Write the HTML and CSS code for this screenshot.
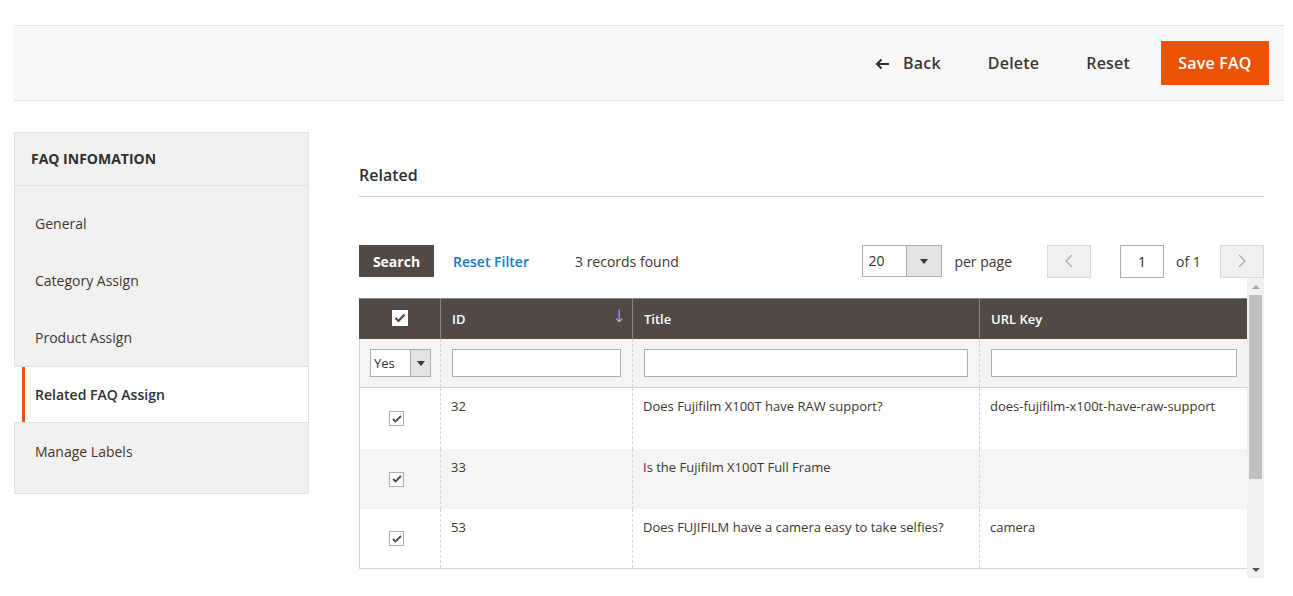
FILE: index.html
```html
<!DOCTYPE html>
<html>
<head>
<meta charset="utf-8">
<link rel="stylesheet" href="styles.css">
</head>
<body>
<div class="page">
  <div class="page-actions">
    <button class="act back"><svg width="15" height="12" viewBox="0 0 15 12"><path d="M14 6H2M6.5 1.5L2 6l4.5 4.5" fill="none" stroke="#303030" stroke-width="2"/></svg>Back</button>
    <button class="act">Delete</button>
    <button class="act">Reset</button>
    <button class="save">Save FAQ</button>
  </div>
  <div class="content">
    <aside class="tabs">
      <div class="tabs-title">FAQ INFOMATION</div>
      <ul class="tab-list">
        <li class="tab">General</li>
        <li class="tab">Category Assign</li>
        <li class="tab">Product Assign</li>
        <li class="tab active">Related FAQ Assign</li>
        <li class="tab last">Manage Labels</li>
      </ul>
    </aside>
    <main class="main">
      <h2 class="section-title">Related</h2>
      <div class="toolbar">
        <button class="search">Search</button>
        <a class="reset-filter">Reset Filter</a>
        <span class="records">3 records found</span>
        <div class="pager">
          <div class="limit"><span class="limit-val">20</span><span class="limit-arrow"><i class="tri"></i></span></div>
          <span class="per-page">per page</span>
          <button class="pg prev"><svg width="8" height="14" viewBox="0 0 8 14"><path d="M7 1L1 7l6 6" fill="none" stroke="#adadad" stroke-width="1.3"/></svg></button>
          <div class="page-input">1</div>
          <span class="of">of 1</span>
          <button class="pg next"><svg width="8" height="14" viewBox="0 0 8 14"><path d="M1 1l6 6-6 6" fill="none" stroke="#adadad" stroke-width="1.3"/></svg></button>
        </div>
      </div>
      <div class="grid-wrap">
        <div class="grid-scroll">
          <table class="grid">
            <colgroup><col class="c1"><col class="c2"><col class="c3"><col class="c4"></colgroup>
            <thead>
              <tr class="head">
                <th class="cb-col"><span class="hcb"><svg width="12" height="10" viewBox="0 0 12 10"><path d="M1.5 5l3 3 6-6.5" fill="none" stroke="#514943" stroke-width="2.2"/></svg></span></th>
                <th class="sorted">ID<span class="sort">↓</span></th>
                <th>Title</th>
                <th>URL Key</th>
              </tr>
              <tr class="filters">
                <td class="cb-col"><div class="yes"><span class="yes-val">Yes</span><span class="yes-arrow"><i class="tri"></i></span></div></td>
                <td><div class="inp"></div></td>
                <td><div class="inp"></div></td>
                <td><div class="inp"></div></td>
              </tr>
            </thead>
            <tbody>
              <tr>
                <td class="cb-col"><span class="cb"><svg width="10" height="8" viewBox="0 0 10 8"><path d="M1 4l2.5 2.5L9 1" fill="none" stroke="#514943" stroke-width="1.8"/></svg></span></td>
                <td>32</td>
                <td>Does Fujifilm X100T have RAW support?</td>
                <td>does-fujifilm-x100t-have-raw-support</td>
              </tr>
              <tr class="odd">
                <td class="cb-col"><span class="cb"><svg width="10" height="8" viewBox="0 0 10 8"><path d="M1 4l2.5 2.5L9 1" fill="none" stroke="#514943" stroke-width="1.8"/></svg></span></td>
                <td>33</td>
                <td>Is the Fujifilm X100T Full Frame</td>
                <td></td>
              </tr>
              <tr>
                <td class="cb-col"><span class="cb"><svg width="10" height="8" viewBox="0 0 10 8"><path d="M1 4l2.5 2.5L9 1" fill="none" stroke="#514943" stroke-width="1.8"/></svg></span></td>
                <td>53</td>
                <td>Does FUJIFILM have a camera easy to take selfies?</td>
                <td>camera</td>
              </tr>
            </tbody>
          </table>
        </div>
        <div class="vscroll">
          <div class="sb-btn"><i class="up"></i></div>
          <div class="sb-track"><div class="sb-thumb"></div></div>
          <div class="sb-btn"><i class="down"></i></div>
        </div>
      </div>
    </main>
  </div>
</div>
</body>
</html>
```
FILE: styles.css
```css
* { box-sizing: border-box; }
html, body { margin: 0; padding: 0; background: #fff; }
body { font-family: "Open Sans", "Liberation Sans", sans-serif; color: #303030; font-size: 14px; }
button { font-family: inherit; border: 0; background: none; padding: 0; cursor: pointer; }
.page { padding: 25px 9px 0 14px; }

.page-actions {
  height: 76px;
  background: #f8f8f8;
  border-top: 1px solid #e3e3e3;
  border-bottom: 1px solid #e3e3e3;
  display: flex;
  align-items: center;
  justify-content: flex-end;
  padding-right: 15px;
}
.act {
  font-size: 16px; font-weight: 600; color: #41362f;
  height: 44px; padding: 0 16px; margin-left: 15px;
  display: flex; align-items: center; gap: 13px;
  letter-spacing: 0.2px;
}
.act svg { margin-top: 1px; }
.save {
  background: #eb5202; color: #fff; font-size: 16px; font-weight: 600;
  height: 44px; width: 108px; margin-left: 15px;
  letter-spacing: 0.2px;
}

.content { display: flex; gap: 50px; margin-top: 31px; padding-right: 20px; }
.tabs {
  width: 295px; flex: 0 0 295px;
  background: #f1f1f1;
  border: 1px solid #e3e3e3;
  height: 362px;
}
.tabs-title {
  height: 53px; line-height: 52px;
  padding-left: 16px;
  font-weight: 700; font-size: 14px; color: #303030;
  border-bottom: 1px solid #e3e3e3;
}
.tab-list { list-style: none; margin: 0; padding: 0; }
.tab {
  height: 57px; line-height: 20px;
  padding: 19px 0 0 20px;
  font-size: 14px; color: #41362f;
}
.tab-list .tab:first-child { height: 66px; padding-top: 28px; }
.tab.active {
  margin-left: -1px;
  height: 57px;
  border-top: 1px solid #e3e3e3;
  border-bottom: 1px solid #e3e3e3;
  padding-top: 18px;
  font-weight: 600; color: #303030;
  background: linear-gradient(to right, #fff 8px, #eb5202 8px, #eb5202 11px, #fff 11px);
  padding-left: 21px;
}
.tab.last { padding-top: 19px; }

.main { flex: 1; }
.section-title {
  margin: 32px 0 0; font-size: 16px; font-weight: 600; line-height: 22px; color: #303030;
  padding-bottom: 10px; border-bottom: 1px solid #cccccc;
}
.toolbar { display: flex; align-items: center; margin-top: 48px; height: 32px; }
.search {
  background: #514943; color: #fff; font-weight: 700; font-size: 14px;
  height: 32px; width: 75px;
}
.reset-filter { color: #1979c3; font-size: 14px; margin-left: 19px; font-weight: 600; }
.records { margin-left: 46px; font-size: 14px; color: #41362f; }
.pager { margin-left: auto; display: flex; align-items: center; height: 32px; }
.limit { display: flex; width: 80px; height: 32px; border: 1px solid #adadad; }
.limit-val { flex: 1; padding-left: 5px; line-height: 30px; font-size: 14px; }
.limit-arrow { width: 35px; background: #e3e3e3; border-left: 1px solid #adadad; display: flex; align-items: center; justify-content: center; }
.tri { display: block; width: 0; height: 0; border-left: 4px solid transparent; border-right: 4px solid transparent; border-top: 5px solid #41362f; }
.per-page { margin-left: 12px; font-size: 14px; color: #41362f; }
.pg { width: 44px; height: 33px; background: #f0f0f0; border: 1px solid #dadada; display: flex; align-items: center; justify-content: center; }
.prev { margin-left: 35px; }
.page-input { margin-left: 29px; width: 44px; height: 33px; border: 1px solid #adadad; text-align: center; line-height: 31px; font-size: 14px; }
.of { margin-left: 12px; font-size: 14px; color: #41362f; width: 32px; }
.next { margin-left: 12px; }

.grid-wrap { display: flex; margin-top: 1px; height: 300px; }
.grid-scroll { flex: 0 0 888px; padding-top: 20px; overflow: hidden; }
.grid { border-collapse: collapse; width: 888px; table-layout: fixed; font-size: 13px; }
.c1 { width: 81px; } .c2 { width: 192px; } .c3 { width: 347px; } .c4 { width: 268px; }
.head th {
  background: #514943; color: #fff; font-weight: 600; font-size: 13px;
  height: 40px; text-align: left; padding: 0 11px;
  border-left: 1px solid #8a837f; border-top: 1px solid #8a837f;
}
.head th:first-child { border-left: 1px solid #514943; }
.head th.sorted { position: relative; }
.sort { position: absolute; right: 6px; top: 7px; font-weight: 300; font-size: 17px; color: #cfcfcf; font-family: "DejaVu Sans", sans-serif; }
.head .cb-col { text-align: center; padding: 0; }
.hcb { display: inline-flex; width: 16px; height: 16px; background: #fff; align-items: center; justify-content: center; vertical-align: middle; margin-top: -4px; }
.filters td { background: #f4f4f4; height: 49px; padding: 1px 11px 0; border-left: 1px dashed #d6d6d6; border-bottom: 1px solid #d6d6d6; }
.filters td.cb-col { border-left: 1px solid #d6d6d6; padding: 1px 0 0 10px; }
.yes { width: 61px; height: 28px; border: 1px solid #adadad; background: #fff; display: flex; }
.yes-val { flex: 1; padding-left: 3px; line-height: 26px; font-size: 13px; }
.yes-arrow { width: 20px; background: #e3e3e3; border-left: 1px solid #adadad; display: flex; align-items: center; justify-content: center; }
.inp { height: 28px; background: #fff; border: 1px solid #adadad; }
tbody td {
  height: 60px; vertical-align: top; padding: 9px 11px 0 10px;
  border-left: 1px dashed #d6d6d6; color: #41362f; line-height: 18px;
}
tbody tr:first-child td { height: 61px; }
tbody tr:last-child td { border-bottom: 1px solid #d6d6d6; }
tbody td.cb-col { border-left: 1px solid #d6d6d6; vertical-align: middle; text-align: center; padding: 0 7px 0 0; }
tbody tr.odd td { background: #f5f5f5; }
.cb { display: inline-flex; width: 15px; height: 15px; border: 1px solid #adadad; background: #fff; align-items: center; justify-content: center; vertical-align: middle; margin-top: -2px; }

.vscroll { width: 17px; background: #f1f1f1; display: flex; flex-direction: column; }
.sb-btn { height: 17px; display: flex; align-items: center; justify-content: center; }
.sb-track { flex: 1; padding: 0 2px; }
.sb-thumb { height: 184px; background: #c1c1c1; }
.up { width: 0; height: 0; border-left: 4px solid transparent; border-right: 4px solid transparent; border-bottom: 4px solid #a3a3a3; }
.down { width: 0; height: 0; border-left: 4px solid transparent; border-right: 4px solid transparent; border-top: 4px solid #505050; }
```
